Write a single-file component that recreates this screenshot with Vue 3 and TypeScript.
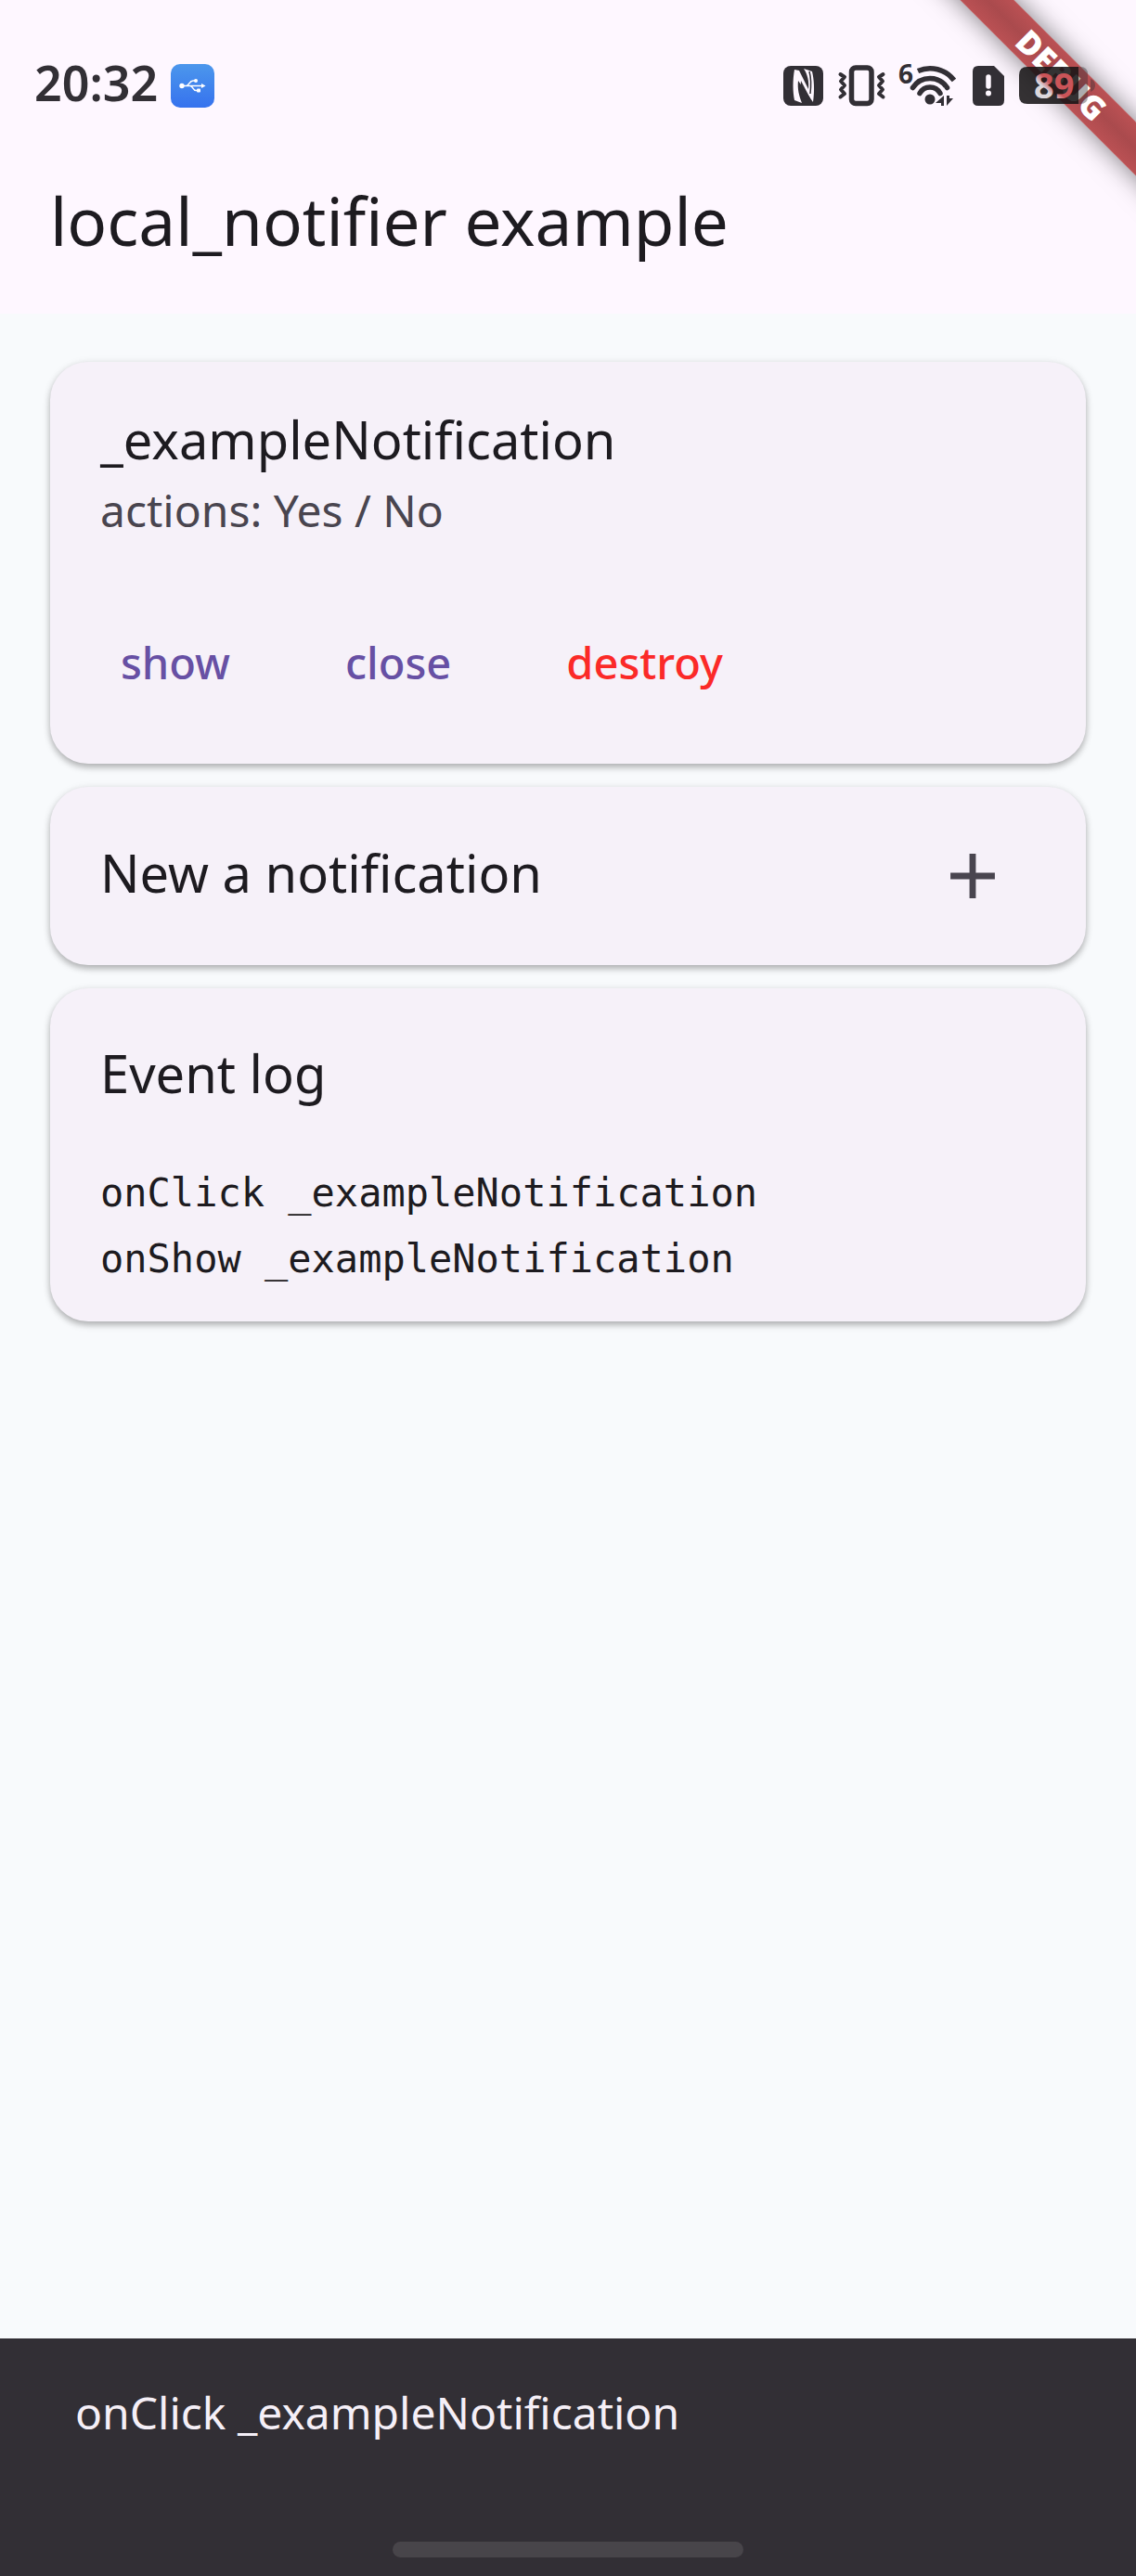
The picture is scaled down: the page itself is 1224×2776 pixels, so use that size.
<script setup lang="ts">
import { ref } from 'vue'

interface Item {
  title: string
  subtitle: string
}

const items = ref<Item[]>([
  { title: '_exampleNotification', subtitle: 'actions: Yes / No' },
])
const log = ref<string[]>([
  'onClick _exampleNotification',
  'onShow _exampleNotification',
])
const message = ref('onClick _exampleNotification')

function record(event: string, item: Item) {
  message.value = `${event} ${item.title}`
  log.value.unshift(message.value)
}

function destroy(item: Item) {
  items.value = items.value.filter((other) => other !== item)
}

function add() {
  items.value.push({ title: '_exampleNotification', subtitle: 'actions: Yes / No' })
}
</script>

<template>
  <div class="screen">
    <header class="app-bar">
      <div class="ribbon">DEBUG</div>

      <div class="status">
        <span class="clock">20:32</span>
        <svg class="usb" viewBox="0 0 47 47" width="47" height="47" aria-hidden="true">
          <defs>
            <linearGradient id="usb-bg" x1="0" y1="0" x2="0" y2="1">
              <stop offset="0" stop-color="#4c97ec" />
              <stop offset="1" stop-color="#3672ee" />
            </linearGradient>
          </defs>
          <rect width="47" height="47" rx="10" fill="url(#usb-bg)" />
          <g fill="none" stroke="#fff" stroke-width="1.5">
            <path d="M12 23.5H34M17 23.5C20 23 20 18 24 18H27M21 23.5C24 24 24 28.500 27 28.500H30" />
          </g>
          <g fill="#fff">
            <circle cx="12" cy="23.500" r="2.700" />
            <circle cx="27" cy="18" r="2" />
            <rect x="28" y="26.500" width="4" height="4" rx="1" />
            <path d="M33 21L37.500 23.500L33 26Z" />
          </g>
        </svg>

        <div class="indicators">
          <svg viewBox="0 0 43 44" width="43" height="44" aria-label="NFC">
            <rect y="1" width="43" height="43" rx="8" fill="#322f35" />
            <path
              d="M12 5C10 16 10 29 12 38L20 41C17 33 15 26 16 17L32 40C34 27 33 15 31 7L22 4C26 10 28 18 27 26L17 6Z"
              fill="#fef7ff"
            />
            <path d="M19 17C18 24 19 31 22 37L29 36Z" fill="#322f35" />
            <path d="M28 7C30 14 30 22 29 31" fill="none" stroke="#322f35" stroke-width="1.500" />
          </svg>
          <svg viewBox="0 0 51 44" width="51" height="44" aria-label="Vibrate">
            <g fill="none" stroke="#322f35" stroke-linejoin="round" stroke-linecap="round">
              <rect x="14.500" y="3" width="21.500" height="38.500" rx="4.500" stroke-width="5.500" />
              <path
                d="M2.500 10L7 13L3 17.500L7 22L3 26.500L7 31L2.500 34.500M48.500 10L44 13L48 17.500L44 22L48 26.500L44 31L48.500 34.500"
                stroke-width="4"
              />
            </g>
          </svg>
          <svg viewBox="0 0 62 46" width="62" height="46" aria-label="Wi-Fi 6">
            <text class="wifi-gen" x="-2" y="21">6</text>
            <g fill="none" stroke="#322f35" stroke-width="5.500">
              <path d="M19 7.500A32.500 32.500 0 0 1 58 17.500" />
              <path d="M13.500 25.500A22 22 0 0 1 50.500 25.500" stroke-linecap="round" />
              <path d="M21 31.500A12.500 12.500 0 0 1 43 31.500" stroke-linecap="round" />
            </g>
            <circle cx="32" cy="38" r="5.500" fill="#322f35" />
            <path d="M47 34V45H44V42H38ZM50 34H53V37H57L50 45Z" fill="#322f35" />
          </svg>
          <svg viewBox="0 0 34 44" width="34" height="44" aria-label="No SIM">
            <path d="M6 1H23L34 12V38Q34 44 28 44H6Q0 44 0 38V7Q0 1 6 1Z" fill="#322f35" />
            <path d="M17 13V23" stroke="#fef7ff" stroke-width="5.500" stroke-linecap="round" />
            <circle cx="17" cy="30.500" r="3" fill="#fef7ff" />
          </svg>
          <svg viewBox="0 0 83 44" width="83" height="44" aria-label="Battery">
            <defs>
              <linearGradient
                id="level"
                gradientUnits="userSpaceOnUse"
                x1="26"
                y1="24"
                x2="32"
                y2="18"
              >
                <stop offset="0" stop-color="#dcd8dc" />
                <stop offset="1" stop-color="#cb5458" />
              </linearGradient>
            </defs>
            <path d="M64 2H66Q74 2 74 10V34Q74 42 66 42H64Z" fill="#322f35" opacity="0.4" />
            <path d="M77 15Q82 17 82 22Q82 27 77 29Z" fill="#322f35" opacity="0.4" />
            <path d="M9 2H64V42H9Q0 42 0 33V11Q0 2 9 2Z" fill="#161415" opacity="0.87" />
            <text class="battery-level" x="16" y="36" fill="url(#level)">89</text>
          </svg>
        </div>
      </div>

      <h1>local_notifier example</h1>
    </header>

    <main>
      <section v-for="item in items" :key="item.title" class="card">
        <div class="tile tile-double">
          <h2>{{ item.title }}</h2>
          <p>{{ item.subtitle }}</p>
        </div>
        <div class="actions">
          <button type="button" @click="record('onShow', item)">show</button>
          <button type="button" @click="record('onClose', item)">close</button>
          <button type="button" class="danger" @click="destroy(item)">destroy</button>
        </div>
      </section>

      <section class="card">
        <div class="tile tile-new">
          <h2>New a notification</h2>
          <button type="button" class="add" aria-label="Add notification" @click="add">
            <svg viewBox="0 0 24 24" width="82" height="82" aria-hidden="true">
              <path d="M19 13h-6v6h-2v-6H5v-2h6V5h2v6h6z" fill="#49454f" />
            </svg>
          </button>
        </div>
      </section>

      <section class="card">
        <div class="tile">
          <h2>Event log</h2>
        </div>
        <ul class="log">
          <li v-for="(line, i) in log" :key="i">{{ line }}</li>
        </ul>
      </section>
    </main>

    <footer class="snackbar">
      <p role="status">{{ message }}</p>
      <div class="handle"></div>
    </footer>
  </div>
</template>

<style>
body {
  margin: 0;
}
</style>

<style scoped>
.screen {
  display: flex;
  flex-direction: column;
  min-height: 100vh;
  background: #f8fafc;
  color: #1d1b20;
  font-family: "Noto Sans", "Open Sans", sans-serif;
}

h1,
h2,
p,
ul {
  margin: 0;
  padding: 0;
  font-weight: 400;
}

svg {
  overflow: visible;
}

.app-bar {
  position: relative;
  overflow: hidden;
  padding: 53px 43px 50px 37px;
  background: #fef7ff;
}

.ribbon {
  position: absolute;
  top: 60px;
  right: -120px;
  width: 400px;
  transform: rotate(45deg);
  background: linear-gradient(#bb5154, #aa4a4d, #bb5154);
  box-shadow: 0 0 28px rgba(0, 0, 0, 0.5);
  color: #fff;
  font-size: 35px;
  font-weight: 900;
  line-height: 41px;
  text-align: center;
}

.status {
  position: relative;
  display: flex;
  align-items: center;
  height: 78px;
}

.clock {
  align-self: flex-start;
  color: #322f35;
  font-size: 52px;
  font-weight: 600;
  line-height: 72px;
}

.usb {
  margin-left: 14px;
}

.indicators {
  display: flex;
  align-items: center;
  gap: 16px;
  margin-left: auto;
}

.wifi-gen {
  fill: #322f35;
  font-size: 28px;
  font-weight: 700;
}

.battery-level {
  font-size: 38px;
  font-weight: 700;
}

h1 {
  padding: 57px 0 0 17px;
  font-size: 71px;
  line-height: 100px;
}

main {
  display: flex;
  flex: 1;
  flex-direction: column;
  gap: 25px;
  padding: 52px 54px;
}

.card {
  border-radius: 41px;
  background: #f6f1f9;
  box-shadow: 0 4px 7px rgba(0, 0, 0, 0.26), 0 1px 10px rgba(0, 0, 0, 0.08);
}

.tile {
  padding: 50px 54px;
}

.tile-double {
  padding: 42px 54px 0;
}

.tile-new {
  display: flex;
  align-items: center;
  justify-content: space-between;
  padding: 14px 40px 14px 54px;
}

.tile-new h2 {
  padding-bottom: 8px;
}

h2 {
  font-size: 56px;
  line-height: 82px;
}

.tile p {
  color: #49454f;
  font-size: 48px;
  line-height: 72px;
}

.actions {
  display: flex;
  gap: 80px;
  padding: 60px 54px 41px;
}

button {
  border: 0;
  background: none;
  color: #6750a4;
  font-family: inherit;
  font-size: 47px;
  font-weight: 500;
  line-height: 64px;
  cursor: pointer;
}

.actions button {
  padding: 36px 22px;
}

.actions .danger {
  color: #fb2a28;
}

.add {
  display: grid;
  padding: 41px;
}

.log {
  padding: 3px 54px 32px;
  font-family: "DejaVu Sans Mono", "Liberation Mono", monospace;
  font-size: 42px;
  line-height: 71px;
  list-style: none;
}

.snackbar {
  padding: 44px 81px 20px;
  background: #322f35;
  color: #f5eff7;
}

.snackbar p {
  padding-bottom: 103px;
  font-size: 48px;
  line-height: 72px;
}

.handle {
  width: 378px;
  height: 17px;
  margin: 0 auto;
  border-radius: 9px;
  background: #48454a;
}
</style>
